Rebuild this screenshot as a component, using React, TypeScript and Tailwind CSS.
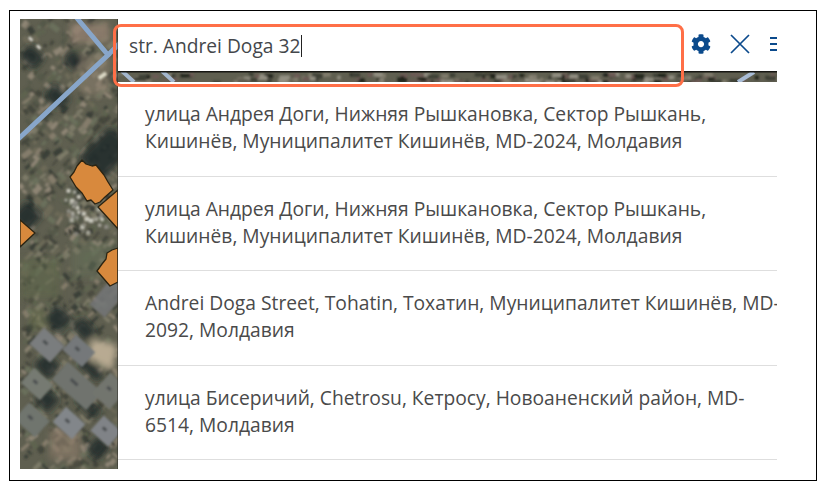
import React from "react";
import { FaCog } from "react-icons/fa";

let seed = 12345;
const rnd = () => {
  seed = (seed * 1664525 + 1013904223) % 4294967296;
  return seed / 4294967296;
};
const palette = ["#45473c", "#6d6a58", "#7d7a68", "#55584a", "#857d6c", "#4b4c40", "#3b3f38", "#6a705c", "#8e8575", "#5e6450"];
const specks = Array.from({ length: 1100 }, () => ({
  x: rnd() * 100,
  y: rnd() * 452,
  w: 2 + rnd() * 9,
  h: 2 + rnd() * 4,
  r: (rnd() > 0.35 ? -45 : 45) + rnd() * 24 - 12,
  c: palette[Math.floor(rnd() * palette.length)],
}));
const rubble = Array.from({ length: 60 }, () => ({
  x: 44 + rnd() * 44,
  y: 168 + rnd() * 46,
  s: 1.5 + rnd() * 3.5,
  c: ["#a9a89d", "#c8c7bc", "#8d8c83", "#3b3c36"][Math.floor(rnd() * 4)],
}));
const stripSpecks = Array.from({ length: 220 }, () => ({
  x: 98 + rnd() * 660,
  y: 53 + rnd() * 9,
  w: 3 + rnd() * 9,
  c: ["#24261f", "#5f5d50", "#807b6c", "#3d3f36", "#6c5a54", "#928f82"][Math.floor(rnd() * 6)],
}));

const roofs = [
  [13, 315, 28, 22, "#7a7d7e"],
  [46, 322, 26, 20, "#74787a"],
  [34, 355, 46, 24, "#70736e"],
  [4, 355, 26, 20, "#767a72"],
  [-2, 390, 28, 22, "#70746e"],
  [36, 394, 26, 20, "#82868a"],
  [74, 402, 24, 20, "#808387"],
  [78, 358, 24, 28, "#72756e"],
] as const;
const shadows = [
  [27, 290, 22, 20],
  [17, 338, 20, 18],
  [54, 303, 20, 14],
  [58, 345, 26, 10],
  [18, 372, 18, 18],
  [55, 382, 26, 10],
  [70, 420, 16, 18],
  [2, 30, 20, 16],
  [26, 70, 22, 16],
  [46, 34, 16, 14],
  [70, 112, 32, 44],
  [-4, 186, 22, 22],
] as const;

function MapPhoto() {
  return (
    <svg className="absolute inset-0" width="757" height="450" viewBox="0 0 757 450">
      <defs>
        <filter id="b1" x="-5%" y="-5%" width="110%" height="110%">
          <feGaussianBlur stdDeviation="1.1" />
        </filter>
        <filter id="b0" x="-5%" y="-5%" width="110%" height="110%">
          <feGaussianBlur stdDeviation="0.6" />
        </filter>
        <filter id="b2" x="-30%" y="-30%" width="160%" height="160%">
          <feGaussianBlur stdDeviation="3" />
        </filter>
        <filter id="b3" x="-10%" y="-10%" width="120%" height="120%">
          <feGaussianBlur stdDeviation="1.2" />
        </filter>
      </defs>
      <rect width="757" height="450" fill="#5f5f50" />
      <g filter="url(#b1)">
        {specks.map((s, i) => (
          <rect key={i} x={s.x} y={s.y} width={s.w} height={s.h} fill={s.c} transform={`rotate(${s.r} ${s.x} ${s.y})`} />
        ))}
      </g>
      <g filter="url(#b2)">
        <rect x="50" y="4" width="40" height="20" fill="#92806f" opacity="0.8" />
        <rect x="60" y="36" width="30" height="40" fill="#8c7f70" opacity="0.55" />
        <rect x="52" y="225" width="46" height="32" fill="#66705a" opacity="0.5" />
        <rect x="0" y="240" width="40" height="40" fill="#5f6a4a" opacity="0.5" />
        <rect x="10" y="290" width="16" height="20" fill="#6b7050" opacity="0.6" />
        <path d="M72 320 L98 326 L92 352 L66 338Z" fill="#b8aa92" />
        <rect x="30" y="410" width="30" height="30" fill="#8a7a68" opacity="0.7" />
        {shadows.map(([x, y, w, h], i) => (
          <rect key={i} x={x} y={y} width={w} height={h} fill="#1f282a" opacity="0.85" transform={`rotate(45 ${x + w / 2} ${y + h / 2})`} />
        ))}
      </g>
      <g filter="url(#b3)">
        {roofs.map(([x, y, w, h, c], i) => (
          <g key={i} transform={`rotate(42 ${x + w / 2} ${y + h / 2})`}>
            <rect x={x} y={y} width={w} height={h} fill={c} />
            <rect x={x + w * 0.3} y={y + h * 0.4} width={w * 0.2} height={3} fill="#4a4d4f" />
          </g>
        ))}
        <rect x="78" y="262" width="20" height="34" fill="#77787a" transform="rotate(40 88 279)" opacity="0.8" />
      </g>
      <g filter="url(#b1)">
        {rubble.map((r, i) => (
          <rect key={i} x={r.x} y={r.y} width={r.s} height={r.s} fill={r.c} />
        ))}
        <rect x="8" y="18" width="5" height="3" fill="#d8d5cc" transform="rotate(45 10 20)" />
        <rect x="16" y="26" width="5" height="3" fill="#d8d5cc" transform="rotate(45 18 28)" />
        <rect x="78" y="55" width="9" height="4" fill="#dedbc8" transform="rotate(-35 82 57)" />
      </g>
      <g fill="none" stroke="#88a6ca" strokeWidth="5" filter="url(#b0)">
        <path d="M56 -2 L88 36 L-6 124" />
        <path d="M88 36 L100 24" />
      </g>
      <g filter="url(#b1)">
        {stripSpecks.map((s, i) => (
          <rect key={i} x={s.x} y={s.y} width={s.w} height={4} fill={s.c} />
        ))}
      </g>
      <g filter="url(#b0)">
        <path d="M102 52 L114 63 M142 52 L154 63" stroke="#a3b6cc" strokeWidth="4" />
        <path d="M718 63 L734 53" stroke="#a9bdd6" strokeWidth="4" />
      </g>
      <rect x="98" y="52" width="659" height="1.5" fill="#161612" />
      <g stroke="#2b2413" strokeWidth="1.3" strokeLinejoin="round" fill="#d8893d">
        <path d="M62 141 L66 145 L72 147 L76 146 L80 151 L84 156 L88 163 L93 171 L85 178 L80 183 L75 185 L71 181 L67 182 L62 174 L56 168 L50 158 L54 153 L57 147 Z" />
        <path d="M98 171 L78 188 L98 210 Z" />
        <path d="M0 201 L15 214 L0 228 Z" />
        <path d="M98 229 L92 231 L87 234 L86 240 L82 245 L77 252 L84 260 L90 267 L98 263 Z" />
      </g>
      <rect x="97" y="0" width="1" height="450" fill="#2a2a24" opacity="0.5" />
    </svg>
  );
}

const rows = [
  "улица Андрея Доги, Нижняя Рышкановка, Сектор Рышкань, Кишинёв, Муниципалитет Кишинёв, MD-2024, Молдавия",
  "улица Андрея Доги, Нижняя Рышкановка, Сектор Рышкань, Кишинёв, Муниципалитет Кишинёв, MD-2024, Молдавия",
  "Andrei Doga Street, Tohatin, Тохатин, Муниципалитет Кишинёв, MD-2092, Молдавия",
  "улица Бисеричий, Chetrosu, Кетросу, Новоаненский район, MD-6514, Молдавия",
];

export default function App() {
  return (
    <div className="w-[824px] h-[489px] bg-white pt-[10px] pl-[9px] overflow-hidden font-['Open_Sans','Noto_Sans',sans-serif]">
      <div className="w-[808px] h-[471px] border border-black pt-[8px] pl-[10px]">
        <div className="relative w-[757px] h-[450px] overflow-hidden">
          <MapPhoto />
          <div className="relative ml-[98px] flex h-full flex-col">
            <div className="flex h-[52px] items-center bg-white">
              <div className="flex h-[44px] w-[565px] items-center self-end pb-[6px] pl-[11px] text-[19.2px] text-[#44474b]">
                <span>str. Andrei Doga 32</span>
                <span className="ml-px h-[22px] w-px bg-[#222]" />
              </div>
              <FaCog className="ml-[8px] mt-[-3px] text-[20px] text-[#0b4a8c]" />
              <svg className="ml-[19px] mt-[-3px]" width="20" height="20" viewBox="0 0 20 20">
                <path d="M1 1 L19 19 M19 1 L1 19" stroke="#0b4a8c" strokeWidth="1.7" fill="none" />
              </svg>
              <div className="ml-[20px] mt-[-2px] flex w-[7px] flex-col gap-[4px]">
                <span className="h-[2px] bg-[#0b4a8c]" />
                <span className="h-[2px] bg-[#0b4a8c]" />
                <span className="h-[2px] bg-[#0b4a8c]" />
              </div>
            </div>
            <div className="h-[11px] shrink-0" />
            <div className="flex flex-1 flex-col overflow-hidden bg-white">
              {rows.map((t, i) => (
                <div
                  key={i}
                  className="flex h-[94.5px] shrink-0 items-center border-b border-[#dedede] pl-[27px] pb-[3px] text-[19.25px] leading-[27px] text-[#4a4a4a]"
                >
                  <span className="w-[636px] shrink-0">{t}</span>
                </div>
              ))}
            </div>
          </div>
          <div className="absolute left-[93px] top-[5px] h-[63px] w-[571px] rounded-[8px] border-[3.5px] border-[#ff6f47]" />
        </div>
      </div>
    </div>
  );
}
